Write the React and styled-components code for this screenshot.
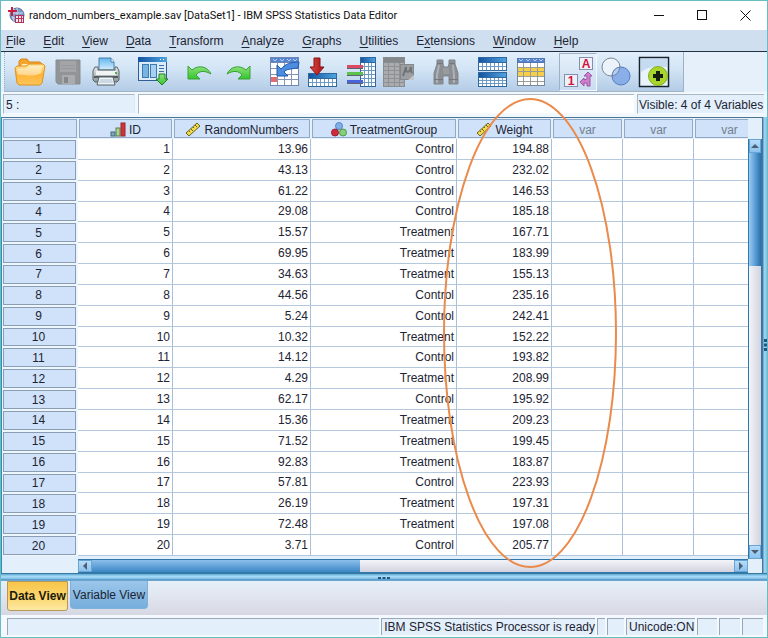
import React from "react";
import styled, { createGlobalStyle, css } from "styled-components";

const GlobalStyle = createGlobalStyle`
 * { box-sizing: border-box; }
 html, body, #root { height: 100%; }
 body {
  margin: 0;
  font-family: "Liberation Sans", Arial, sans-serif;
  font-size: 12px;
  line-height: 16px;
  color: #1d2433;
 }
 button, input { font: inherit; color: inherit; margin: 0; }
`

const Window = styled.div`
 position: relative;
 display: flex;
 flex-direction: column;
 height: 100%;
 min-height: 320px;
 border: 1px solid #68bcc4;
 background: #e3effa;
 overflow: hidden;
`

/* title bar */
const TitleBar = styled.header`
 display: flex;
 align-items: center;
 flex: none;
 height: 29px;
 padding-left: 7px;
 background: #fff;
`
const Title = styled.h1`
 flex: 1;
 margin: 0 0 0 4px;
 font-family: Roboto, "Open Sans", sans-serif;
 font-size: 11px;
 font-weight: 400;
 white-space: nowrap;
 color: #111;
`
const WindowButton = styled.button`
 display: flex;
 align-items: center;
 justify-content: center;
 width: 43px;
 height: 28px;
 padding: 0;
 border: 0;
 background: none;
`

/* menu */
const MenuBar = styled.nav`
 display: flex;
 align-items: center;
 flex: none;
 gap: 18px;
 height: 22px;
 padding-left: 5px;
 background: #cfdfef;
 border-bottom: 1px solid #23303f;
`
const MenuItem = styled.button`
 padding: 0;
 border: 0;
 background: none;
 u { text-underline-offset: 2px; }
`

/* toolbar */
const ToolStrip = styled.div`
 display: flex;
 flex: none;
 height: 40px;
 background: #e5f0fb;
`
const Toolbar = styled.div`
 display: flex;
 align-items: center;
 gap: 9px;
 padding: 0 10px 0 6px;
 margin-left: 3px;
 background: linear-gradient(#e2effb, #d2e4f5 45%, #b3cce6);
 border-left: 1px dotted #9fb0c2;
 border-right: 1px solid #9fb0c2;
 border-bottom: 1px solid #a4b3c3;
`
const ToolGroup = styled.div`
 display: flex;
`
const ToolButton = styled.button`
 display: flex;
 align-items: center;
 justify-content: center;
 width: 38px;
 height: 38px;
 padding: 0;
 border: 1px solid transparent;
 background: none;
 ${(props) => props.$pressed && css`
  border-color: #9db0c5 #f4f9ff #f4f9ff #9db0c5;
  background: linear-gradient(#e6f1fb, #c9dcef);
 `}
`

/* cell editor */
const EditorBar = styled.div`
 display: flex;
 flex: none;
 gap: 3px;
 height: 25px;
 padding: 2px 3px 3px 2px;
 background: #f0f7fd;
`
const CellName = styled.output`
 width: 132px;
 padding: 2px;
 border: 1px solid #a9b6c4;
 border-right-color: #dfe9f3;
 border-bottom-color: #f4f9ff;
 background: #e3effa;
`
const CellInput = styled.input`
 flex: 1;
 min-width: 0;
 border: 1px solid #a9b6c4;
 border-right: 0;
 border-bottom-color: #f4f9ff;
 background: #fff;
 outline: 0;
`
const Visible = styled.div`
 width: 127px;
 padding: 2px 0 0 1px;
 border: 1px solid #a9b6c4;
 border-right: 0;
 border-bottom-color: #f4f9ff;
 background: #e3effa;
 white-space: nowrap;
`

/* sheet */
const Workspace = styled.main`
 display: flex;
 flex: 1;
 min-height: 0;
`
const Sheet = styled.div`
 flex: 1;
 min-width: 0;
 display: grid;
 grid-template-columns: minmax(0, 1fr) 14px;
 grid-template-rows: minmax(0, 1fr) 14px;
 border: 1px solid #4b7594;
 border-left-color: #2d8fb5;
 border-bottom: 0;
 background: #e3effa;
`
const Pane = styled.div`
 overflow: hidden;
 padding-bottom: 3px;
`
const Table = styled.table`
 width: 763px;
 min-width: 100%;
 height: 100%;
 table-layout: fixed;
 border-collapse: separate;
 border-spacing: 0;
 background: #fff;
`
const Col = styled.col`
 width: ${(props) => props.$w}px;
`
const HeadCell = styled.th`
 height: 21px;
 padding: 2px 0 0;
 font-weight: 400;
 color: ${(props) => (props.$empty ? '#75808f' : '#1d2433')};
 background: #cfe2f9;
 border: 1px solid #e6f1fc;
 box-shadow: inset 0 0 0 1px #8fa9c6;
`
const HeadLabel = styled.span`
 display: flex;
 align-items: center;
 justify-content: center;
 gap: 3px;
 line-height: 16px;
`
const RowHead = styled.th`
 padding: 0 2px 0 0;
 font-weight: 400;
 line-height: 18px;
 background: #cfe2f9;
 border: 1px solid #edf5fd;
 border-right-width: 2px;
 box-shadow: inset 0 0 0 1px #8b9db3;
`
const Cell = styled.td`
 padding: 0 2px 0 0;
 line-height: 18px;
 text-align: right;
 border-right: 1px solid #a9c0d8;
 border-bottom: 1px solid #b3c8dd;
`

/* scroll bars */
const ScrollTrack = styled.div`
 display: flex;
 flex-direction: ${(props) => (props.$vertical ? 'column' : 'row')};
 border: 0 solid #2f78ab;
 border-width: ${(props) => (props.$vertical ? '0 1px 0 1px' : '1px 0 1px 0')};
 margin: ${(props) => (props.$vertical ? '21px 0 0' : '0 0 0 76px')};
 background: linear-gradient(${(props) => (props.$vertical ? '90deg' : '180deg')}, #f3f3f9, #d3d3df);
`
const ScrollButton = styled.button`
 display: flex;
 align-items: center;
 justify-content: center;
 flex: none;
 width: ${(props) => (props.$vertical ? '12px' : '14px')};
 height: ${(props) => (props.$vertical ? '14px' : '12px')};
 padding: 0;
 border: 1px solid #66a5d6;
 background: linear-gradient(#b8dcf9, #8dc2ee);
`
const Thumb = styled.div`
 flex: 0 0 ${(props) => (props.$vertical ? '27%' : '40%')};
 background: ${(props) => (props.$vertical
  ? 'linear-gradient(90deg, #9ccbf1, #5b9fd6 50%, #2b6ea8)'
  : 'linear-gradient(#8cc0ec, #3b86c4)')};
`
const Spacer = styled.div`
 flex: 1;
`
const SplitRight = styled.div`
 display: flex;
 align-items: center;
 justify-content: center;
 width: 4px;
 background: linear-gradient(90deg, #5b9cc6, #9ed6f5 40%, #7fc0e2);
`
const SplitBottom = styled.div`
 display: flex;
 justify-content: center;
 flex: none;
 height: 8px;
 border-top: 1px solid #37799f;
 background: linear-gradient(#6db3da 12%, #a6dbf8 30%, #93cdf0 60%, #5f9ecb 75%, #6fa9d3);
`

/* view tabs */
const Tabs = styled.div`
 display: flex;
 align-items: flex-start;
 flex: none;
 gap: 2px;
 height: 34px;
 padding-left: 6px;
 background: linear-gradient(#e6f0f9, #e0e4ee 50%, #d6d7e3);
`
const Tab = styled.button`
 height: 28px;
 width: 78px;
 padding: 0;
 white-space: nowrap;
 border: 1px solid #7fb1d8;
 border-top: 0;
 border-radius: 0 0 4px 4px;
 background: linear-gradient(#9cc6ea, #76aedd);
 ${(props) => props.$active && css`
  height: 30px;
  width: 61px;
  font-weight: 700;
  color: #20190a;
  border: 1px solid #b5975a;
  border-radius: 0 0 3px 3px;
  background: linear-gradient(#f8c64a, #fbd873 60%, #fde9a4);
 `}
`

/* status bar */
const StatusBar = styled.footer`
 display: flex;
 flex: none;
 gap: 2px;
 height: 22px;
 padding: 3px 4px 2px 6px;
 background: #f3f9fe;
`
const StatusCell = styled.div`
 flex: ${(props) => (props.$w ? `0 0 ${props.$w}px` : '1')};
 padding-left: 2px;
 white-space: nowrap;
 border-top: 1px solid #9aa8b6;
 border-left: 1px solid #9aa8b6;
 background: #e3effa;
`

/* hand-drawn ring round the Weight column */
const Ring = styled.svg`
 position: absolute;
 left: 441px;
 top: 97px;
 pointer-events: none;
`
const Defs = styled.svg`
 position: absolute;
`

const Svg = ({ w = 30, h = 30, children }) => (
  <svg width={w} height={h} viewBox={`0 0 ${w} ${h}`} aria-hidden="true">{children}</svg>
)

// little table drawing reused by several toolbar icons
const Grid = ({ x, y, w, h, cols, rows, head = '#2f6fb5', edge = '#2f689f', line = '#6b9ac6', fill = '#fff', top = 5 }) => {
  const lines = []
  for (let i = 1; i < cols; i++) lines.push(`M${x + Math.round((w * i) / cols)} ${y + top}V${y + h}`)
  for (let i = 1; i < rows; i++) lines.push(`M${x} ${y + top + Math.round(((h - top) * i) / rows)}H${x + w}`)
  return (
    <g shapeRendering="crispEdges" transform="translate(-.5 -.5)">
      <rect x={x} y={y} width={w} height={h} fill={fill} />
      <path d={lines.join('')} stroke={line} fill="none" />
      <rect x={x} y={y} width={w} height={h} fill="none" stroke={edge} />
      <rect x={x} y={y} width={w} height={top} fill={head} stroke={edge} />
    </g>
  )
}

const Gradients = () => (
  <Defs width="0" height="0" aria-hidden="true">
    <defs>
      <linearGradient id="gold" x1="0" y1="0" x2="0" y2="1">
        <stop offset="0" stopColor="#ffe9a0" /><stop offset=".5" stopColor="#ffb638" /><stop offset="1" stopColor="#fbc55a" />
      </linearGradient>
      <linearGradient id="blue" x1="0" y1="0" x2="1" y2="0">
        <stop offset="0" stopColor="#1552a0" /><stop offset="1" stopColor="#4fa4e0" />
      </linearGradient>
      <linearGradient id="paper" x1="0" y1="0" x2="0" y2="1">
        <stop offset="0" stopColor="#62b6ee" /><stop offset="1" stopColor="#d6effd" />
      </linearGradient>
      <linearGradient id="green" x1="0" y1="0" x2="0" y2="1">
        <stop offset="0" stopColor="#8fe27c" /><stop offset="1" stopColor="#34c52c" />
      </linearGradient>
      <linearGradient id="red" x1="0" y1="0" x2="1" y2="0">
        <stop offset="0" stopColor="#e2483f" /><stop offset="1" stopColor="#a31318" />
      </linearGradient>
      <linearGradient id="metal" x1="0" y1="0" x2="0" y2="1">
        <stop offset="0" stopColor="#e9ecec" /><stop offset="1" stopColor="#8d9799" />
      </linearGradient>
    </defs>
  </Defs>
)

const AppIcon = () => (
  <Svg w={17} h={17}>
    <circle cx="9" cy="8" r="7" fill="#7a9cc9" stroke="#54709f" />
    <path d="M3 6h12M4 11h11M9 1v14M6 2c-2 4-2 8 0 12" stroke="#c9daf0" fill="none" />
    <path d="M4 0v9M0 4h9" stroke="#d01c3f" strokeWidth="2" />
    <rect x="7.500" y="8.500" width="8" height="7" fill="#f3e3ea" stroke="#a8335a" />
    <path d="M7 11.500h9M10.500 8v8M13.500 8v8" stroke="#b8345c" />
  </Svg>
)

const OpenIcon = () => (
  <Svg w={32}>
    <path d="M5 9V4l2-2h6l2 3h11l2 2v5z" fill="#f6a42c" stroke="#d98417" />
    <path d="M7 10l1-3h17v4z" fill="#fff1c4" />
    <path d="M1 11l2-2h9l3-2h14l2 2-3 17-2 2H5l-2-2z" fill="url(#gold)" stroke="#e0901c" />
    <path d="M3 12l10-1 3-2h12l-1 7C18 21 10 17 4 18z" fill="#fff" opacity=".45" />
  </Svg>
)
const SaveIcon = () => (
  <Svg>
    <path d="M3 3h24v24H5l-2-2z" fill="#929598" stroke="#888b8f" />
    <rect x="7" y="4" width="16" height="11" fill="#a3a5a8" />
    <path d="M8 8.500h14M8 11.500h14" stroke="#96999c" />
    <rect x="9" y="18" width="13" height="9" fill="#aaacaf" />
    <rect x="11" y="20" width="4" height="6" fill="#85888b" />
  </Svg>
)
const PrintIcon = () => (
  <Svg>
    <path d="M8 1h12l3 4v8H8z" fill="url(#paper)" stroke="#4a7fa8" />
    <path d="M20 1v4h3" fill="#fff" stroke="#4a7fa8" />
    <path d="M4 10h3v3h17v-3h2l2 4v9l-2 2H4l-2-2v-9z" fill="url(#metal)" stroke="#596365" />
    <path d="M5 14h20v4H5z" fill="#f2f4f4" />
    <path d="M3 20h24" stroke="#525c5e" strokeWidth="2" />
    <path d="M8 20h14l2 8H6z" fill="#eef5fa" stroke="#596365" />
    <path d="M9 23h12M8 25h14" stroke="#a9bccb" />
    <rect x="24" y="15" width="2" height="2" fill="#5aa84a" />
  </Svg>
)
const RecallIcon = () => (
  <Svg>
    <rect x=".5" y=".5" width="28" height="23" fill="#dcebf9" stroke="#2f5f95" />
    <rect x="0" y="0" width="29" height="5" fill="url(#blue)" />
    <path d="M22 2.500h1M25 2.500h1" stroke="#fff" />
    <rect x="4.500" y="7.500" width="6" height="13" fill="#78b4e2" stroke="#3d79b2" />
    <rect x="12.500" y="7.500" width="6" height="13" fill="#a8d0f0" stroke="#3d79b2" />
    <path d="M21 8.500h5M21 11.500h5M21 14.500h5" stroke="#3b6ea2" />
    <path d="M21 17h6v5h3l-6 6-6-6h3z" fill="url(#green)" stroke="#237f22" />
  </Svg>
)
const UndoIcon = ({ flip }) => (
  <Svg>
    <g transform={flip ? 'translate(30 0) scale(-1 1)' : undefined}>
      <path d="M3 9v13h12l-4-4c3-4 8-5 15-1C23 10 14 7 7 13z" fill="url(#green)" stroke="#3aa03c" strokeLinejoin="round" />
    </g>
  </Svg>
)
const GotoCaseIcon = () => (
  <Svg>
    <Grid x={1} y={1} w={28} h={28} cols={4} rows={4} head="#5686d2" edge="#7286b4" line="#8794b4" top={5} />
    <path d="M3 2l2 2 2-2M10 2l2 2 2-2M17 2l2 2 2-2M23 2l2 2 2-2" fill="none" stroke="#b9d4f7" />
    <rect x="1" y="20" width="6" height="5" fill="#e36b70" />
    <path d="M7 8v11h11l-4-4c2-3 7-3 14-4l1-6C21 5 15 7 11 12z" fill="#4c8de0" stroke="#1f59ad" />
  </Svg>
)
const GotoVariableIcon = () => (
  <Svg>
    <Grid x={1} y={17} w={28} h={13} cols={7} rows={2} head="url(#blue)" />
    <path d="M6 1h6v9h4l-7 8-7-8h4z" fill="url(#red)" stroke="#861217" />
  </Svg>
)
const VariablesIcon = () => (
  <Svg>
    <Grid x={15} y={1} w={15} h={29} cols={4} rows={6} head="url(#blue)" />
    <g shapeRendering="crispEdges">
      <path d="M1 9.500h16" stroke="#dc4a64" strokeWidth="3" />
      <path d="M1 16.500h16" stroke="#5cc24c" strokeWidth="3" />
      <path d="M1 24.500h16" stroke="#4a63d6" strokeWidth="3" />
      <path d="M1 11.500h16M1 18.500h16M1 26.500h16" stroke="#5c6470" />
    </g>
  </Svg>
)
const DescriptivesIcon = () => (
  <Svg w={32}>
    <Grid x={1} y={1} w={21} h={29} cols={4} rows={6} head="#85888b" edge="#8a8d90" line="#8e9194" fill="#a9abae" />
    <rect x="17.500" y="7.500" width="13" height="15" fill="#9c9ea1" stroke="#85888b" />
    <path d="M20 19l3-9v4q2 2 4-1l1-3v4l1 2" fill="none" stroke="#707376" strokeWidth="2" />
    <path d="M25 23l6-5v5z" fill="#c3c6c9" />
  </Svg>
)
const FindIcon = () => (
  <Svg>
    <path d="M6 3h6v4l1 3h4l1-3V3h6v4l3 9v11h-9v-8h-6v8H3V16L6 7z" fill="#8b8f93" stroke="#83878b" />
    <path d="M8 8L6 18v8M22 8l1 10v8" stroke="#aeb2b6" strokeWidth="2" fill="none" />
    <path d="M3 22.500h9M18 22.500h9M6 6.500h6M18 6.500h6" stroke="#74787c" />
    <rect x="12" y="11" width="6" height="6" fill="#989ca0" />
  </Svg>
)
const SplitIcon = () => (
  <Svg>
    <Grid x={1} y={1} w={28} h={13} cols={7} rows={2} head="url(#blue)" />
    <Grid x={1} y={16} w={28} h={14} cols={7} rows={3} head="url(#blue)" />
  </Svg>
)
const SelectIcon = () => (
  <Svg>
    <g shapeRendering="crispEdges">
      <rect x="1" y="1" width="27" height="28" fill="#fff" />
      <rect x="1" y="10" width="27" height="10" fill="#f5cf4a" />
      <path d="M7.500 5v24M14.500 5v24M21.500 5v24M1 10.500h27M1 14.500h27M1 19.500h27M1 24.500h27" stroke="#9a9d96" />
      <rect x="1.500" y="1.500" width="27" height="27" stroke="#7a889c" fill="none" />
      <rect x="1.500" y="1.500" width="27" height="4" fill="#5686d2" stroke="#5676b0" />
    </g>
    <path d="M3 2l2 2 2-2M10 2l2 2 2-2M17 2l2 2 2-2M23 2l2 2 2-2" fill="none" stroke="#b9d4f7" />
  </Svg>
)
const ValueLabelsIcon = () => (
  <Svg w={32} h={32}>
    <g fontFamily="Liberation Sans, sans-serif" fontWeight="700" textAnchor="middle" fill="#d3123f">
      <rect x="17.500" y="1.500" width="13" height="12" fill="#eef1f8" stroke="#8290ad" />
      <text x="24" y="12" fontSize="12">A</text>
      <rect x="2.500" y="18.500" width="13" height="12" fill="#eef1f8" stroke="#8290ad" />
      <text x="9" y="29" fontSize="12">1</text>
    </g>
    <path d="M25 20h-3l4-4 4 4h-2v10h-3v-3h-3v3l-4-4 4-4v2l3-1z" fill="#cf7fcd" stroke="#9d54a3" />
  </Svg>
)
const SetsIcon = () => (
  <Svg>
    <circle cx="10" cy="10" r="9" fill="#edf3fa" stroke="#7d8792" />
    <circle cx="20" cy="19" r="9" fill="#7fa6e6" fillOpacity=".85" stroke="#557bbd" />
    <path d="M18.600 10.100A9 9 0 0 1 11.100 19A9 9 0 0 1 18.600 10.100" fill="#b5cdf0" stroke="#6f86aa" />
  </Svg>
)
const AddonIcon = () => (
  <Svg w={32} h={32}>
    <rect x="1.500" y="1.500" width="29" height="29" fill="#e9f3fb" stroke="#16222e" strokeWidth="1.500" />
    <path d="M3 3h26v8Q12 9 3 16z" fill="#c4dbf1" />
    <circle cx="20" cy="20" r="9.500" fill="#a9d62c" stroke="#86ab22" />
    <path d="M20 15v10M15 20h10" stroke="#161d10" strokeWidth="4" />
  </Svg>
)

const OrdinalIcon = () => (
  <Svg w={16} h={15}>
    <rect x="1" y="10" width="4" height="4" fill="#7da7c4" stroke="#456779" />
    <rect x="6" y="6" width="4" height="8" fill="#a9d48c" stroke="#5f7f55" />
    <rect x="11" y="1" width="4" height="13" fill="#d3323a" stroke="#93282d" />
  </Svg>
)
const ScaleIcon = () => (
  <Svg w={16} h={15}>
    <path d="M1 11L12 1l3 3L4 14z" fill="#efd94c" stroke="#6b6424" />
    <path d="M4 9l1 1M6 7l2 2M8 5l1 1M10 3l2 2" stroke="#6b6424" />
  </Svg>
)
const NominalIcon = () => (
  <Svg w={16} h={15}>
    <circle cx="8" cy="4" r="3.500" fill="#7fb0e8" stroke="#5585c0" />
    <circle cx="4" cy="10.500" r="3.500" fill="#d12a3c" stroke="#96202c" />
    <circle cx="12" cy="10.500" r="3.500" fill="#86d078" stroke="#4f9746" />
  </Svg>
)

const menus = [
  ['', 'F', 'ile'], ['', 'E', 'dit'], ['', 'V', 'iew'], ['', 'D', 'ata'], ['', 'T', 'ransform'],
  ['', 'A', 'nalyze'], ['', 'G', 'raphs'], ['', 'U', 'tilities'], ['E', 'x', 'tensions'],
  ['', 'W', 'indow'], ['', 'H', 'elp'],
]

const tools = [
  [['Open', <OpenIcon />], ['Save', <SaveIcon />], ['Print', <PrintIcon />]],
  [['Recall dialogs', <RecallIcon />]],
  [['Undo', <UndoIcon />], ['Redo', <UndoIcon flip />]],
  [['Go to case', <GotoCaseIcon />], ['Go to variable', <GotoVariableIcon />], ['Variables', <VariablesIcon />], ['Descriptives', <DescriptivesIcon />]],
  [['Find', <FindIcon />]],
  [['Split file', <SplitIcon />], ['Select cases', <SelectIcon />]],
  [['Value labels', <ValueLabelsIcon />, true], ['Variable sets', <SetsIcon />], ['Customize', <AddonIcon />]],
]

const columns = [
  { name: 'ID', width: 95, icon: <OrdinalIcon /> },
  { name: 'RandomNumbers', width: 138, icon: <ScaleIcon /> },
  { name: 'TreatmentGroup', width: 146, icon: <NominalIcon /> },
  { name: 'Weight', width: 95, icon: <ScaleIcon /> },
  { name: 'var', width: 71 },
  { name: 'var', width: 71 },
  { name: 'var', width: 71 },
]

const rows = [
  ['13.96', 'Control', '194.88'],
  ['43.13', 'Control', '232.02'],
  ['61.22', 'Control', '146.53'],
  ['29.08', 'Control', '185.18'],
  ['15.57', 'Treatment', '167.71'],
  ['69.95', 'Treatment', '183.99'],
  ['34.63', 'Treatment', '155.13'],
  ['44.56', 'Control', '235.16'],
  ['5.24', 'Control', '242.41'],
  ['10.32', 'Treatment', '152.22'],
  ['14.12', 'Control', '193.82'],
  ['4.29', 'Treatment', '208.99'],
  ['62.17', 'Control', '195.92'],
  ['15.36', 'Treatment', '209.23'],
  ['71.52', 'Treatment', '199.45'],
  ['92.83', 'Treatment', '183.87'],
  ['57.81', 'Control', '223.93'],
  ['26.19', 'Treatment', '197.31'],
  ['72.48', 'Treatment', '197.08'],
  ['3.71', 'Control', '205.77'],
]

const ScrollBar = ({ vertical }) => (
  <ScrollTrack $vertical={vertical}>
    <ScrollButton $vertical={vertical} aria-label={vertical ? 'Scroll up' : 'Scroll left'}>
      <Svg w={8} h={8}><path d={vertical ? 'M0 6h8L4 2z' : 'M6 0v8L2 4z'} fill="#4a5f75" /></Svg>
    </ScrollButton>
    <Thumb $vertical={vertical} />
    <Spacer />
    <ScrollButton $vertical={vertical} aria-label={vertical ? 'Scroll down' : 'Scroll right'}>
      <Svg w={8} h={8}><path d={vertical ? 'M0 2h8L4 6z' : 'M2 0v8l4-4z'} fill="#4a5f75" /></Svg>
    </ScrollButton>
  </ScrollTrack>
)

export default function App() {
  return (
    <>
      <GlobalStyle />
      <Window>
        <Gradients />
        <TitleBar>
          <AppIcon />
          <Title>random_numbers_example.sav [DataSet1] - IBM SPSS Statistics Data Editor</Title>
          <WindowButton aria-label="Minimize">
            <Svg w={11} h={11}><path d="M0 5.500h10" stroke="#111" /></Svg>
          </WindowButton>
          <WindowButton aria-label="Maximize">
            <Svg w={11} h={11}><rect x=".5" y=".5" width="9" height="9" fill="none" stroke="#111" /></Svg>
          </WindowButton>
          <WindowButton aria-label="Close">
            <Svg w={11} h={11}><path d="M.5.5l10 10M10.500.5l-10 10" stroke="#111" /></Svg>
          </WindowButton>
        </TitleBar>

        <MenuBar>
          {menus.map(([before, key, after]) => (
            <MenuItem key={key}>{before}<u>{key}</u>{after}</MenuItem>
          ))}
        </MenuBar>

        <ToolStrip>
          <Toolbar>
            {tools.map((group, i) => (
              <ToolGroup key={i}>
                {group.map(([label, icon, pressed]) => (
                  <ToolButton key={label} aria-label={label} $pressed={pressed}>{icon}</ToolButton>
                ))}
              </ToolGroup>
            ))}
          </Toolbar>
        </ToolStrip>

        <EditorBar>
          <CellName>5 :</CellName>
          <CellInput aria-label="Cell value" />
          <Visible>Visible: 4 of 4 Variables</Visible>
        </EditorBar>

        <Workspace>
          <Sheet>
            <Pane>
              <Table>
                <colgroup>
                  <Col $w={76} />
                  {columns.map((c, i) => <Col key={i} $w={c.width} />)}
                </colgroup>
                <thead>
                  <tr>
                    <HeadCell as="td" $empty />
                    {columns.map((c, i) => (
                      <HeadCell key={i} scope="col" $empty={!c.icon}>
                        <HeadLabel>{c.icon}{c.name}</HeadLabel>
                      </HeadCell>
                    ))}
                  </tr>
                </thead>
                <tbody>
                  {rows.map(([random, group, weight], i) => (
                    <tr key={i}>
                      <RowHead scope="row">{i + 1}</RowHead>
                      <Cell>{i + 1}</Cell>
                      <Cell>{random}</Cell>
                      <Cell>{group}</Cell>
                      <Cell>{weight}</Cell>
                      <Cell /><Cell /><Cell />
                    </tr>
                  ))}
                </tbody>
              </Table>
            </Pane>
            <ScrollBar vertical />
            <ScrollBar />
          </Sheet>
          <SplitRight>
            <Svg w={4} h={14}><path d="M1 1h3v3H1zM1 5.500h3v3H1zM1 10h3v3H1z" fill="#1f5686" /></Svg>
          </SplitRight>
        </Workspace>
        <SplitBottom>
          <Svg w={14} h={7}><path d="M1 3h3v2H1zM5.500 3h3v2h-3zM10 3h3v2h-3z" fill="#1f5686" /></Svg>
        </SplitBottom>

        <Tabs role="tablist">
          <Tab role="tab" aria-selected="true" $active>Data View</Tab>
          <Tab role="tab" aria-selected="false">Variable View</Tab>
        </Tabs>

        <StatusBar>
          <StatusCell />
          <StatusCell $w={208}>IBM SPSS Statistics Processor is ready</StatusCell>
          <StatusCell $w={8} />
          <StatusCell $w={17} />
          <StatusCell $w={69}>Unicode:ON</StatusCell>
          <StatusCell $w={20} />
          <StatusCell $w={21} />
          <StatusCell $w={21} />
        </StatusBar>

        <Ring width="178" height="472" viewBox="0 0 178 472" aria-hidden="true">
          <ellipse cx="88" cy="235" rx="86" ry="234" fill="none" stroke="#ea8a4b" strokeWidth="2" />
        </Ring>
      </Window>
    </>
  )
}
